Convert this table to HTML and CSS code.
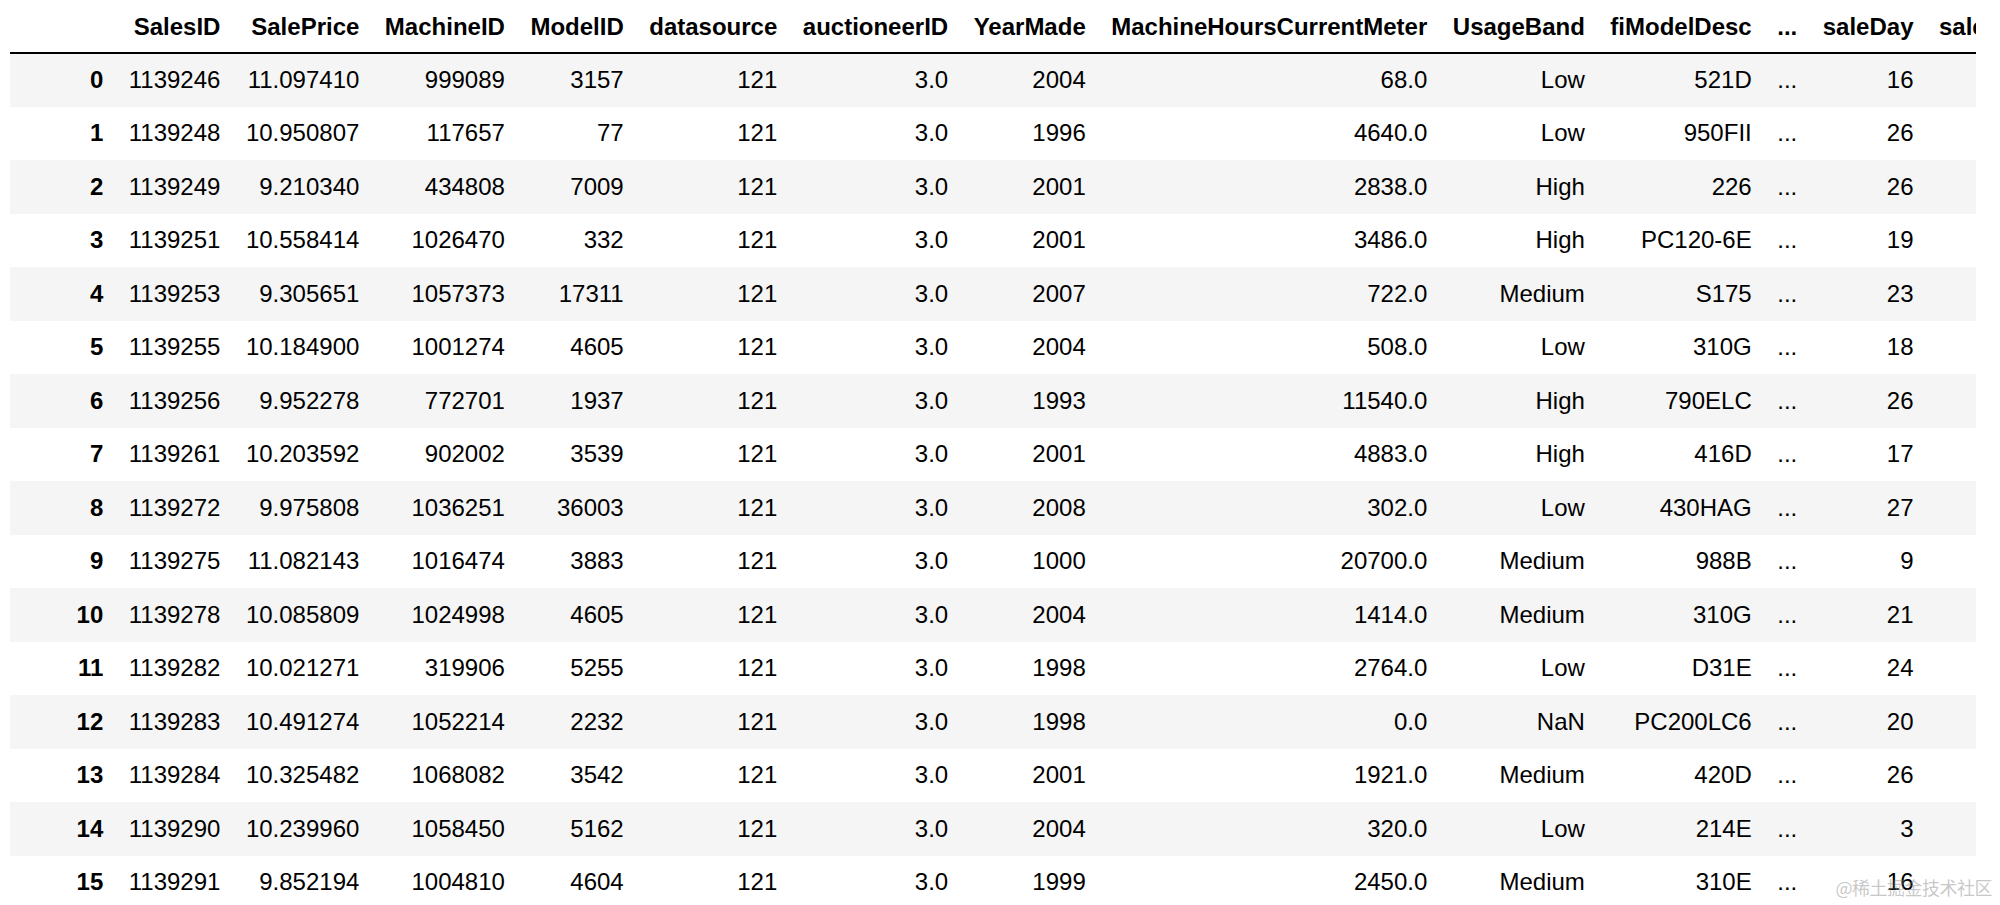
FILE: index.html
```html
<!DOCTYPE html>
<html lang="en">
<head>
<meta charset="utf-8">
<title>DataFrame</title>
<link rel="stylesheet" href="styles.css">
</head>
<body>
<div class="output">
  <table class="dataframe">
    <thead>
      <tr>
        <th class="idx-head"></th>
        <th>SalesID</th>
        <th>SalePrice</th>
        <th>MachineID</th>
        <th>ModelID</th>
        <th>datasource</th>
        <th>auctioneerID</th>
        <th>YearMade</th>
        <th>MachineHoursCurrentMeter</th>
        <th>UsageBand</th>
        <th>fiModelDesc</th>
        <th>...</th>
        <th>saleDay</th>
        <th>saleDayofweek</th>
        <th>saleDayofyear</th>
      </tr>
    </thead>
    <tbody>
      <tr><th>0</th><td>1139246</td><td>11.097410</td><td>999089</td><td>3157</td><td>121</td><td>3.0</td><td>2004</td><td>68.0</td><td>Low</td><td>521D</td><td>...</td><td>16</td><td>3</td><td>320</td></tr>
      <tr><th>1</th><td>1139248</td><td>10.950807</td><td>117657</td><td>77</td><td>121</td><td>3.0</td><td>1996</td><td>4640.0</td><td>Low</td><td>950FII</td><td>...</td><td>26</td><td>4</td><td>86</td></tr>
      <tr><th>2</th><td>1139249</td><td>9.210340</td><td>434808</td><td>7009</td><td>121</td><td>3.0</td><td>2001</td><td>2838.0</td><td>High</td><td>226</td><td>...</td><td>26</td><td>3</td><td>57</td></tr>
      <tr><th>3</th><td>1139251</td><td>10.558414</td><td>1026470</td><td>332</td><td>121</td><td>3.0</td><td>2001</td><td>3486.0</td><td>High</td><td>PC120-6E</td><td>...</td><td>19</td><td>3</td><td>139</td></tr>
      <tr><th>4</th><td>1139253</td><td>9.305651</td><td>1057373</td><td>17311</td><td>121</td><td>3.0</td><td>2007</td><td>722.0</td><td>Medium</td><td>S175</td><td>...</td><td>23</td><td>3</td><td>204</td></tr>
      <tr><th>5</th><td>1139255</td><td>10.184900</td><td>1001274</td><td>4605</td><td>121</td><td>3.0</td><td>2004</td><td>508.0</td><td>Low</td><td>310G</td><td>...</td><td>18</td><td>3</td><td>353</td></tr>
      <tr><th>6</th><td>1139256</td><td>9.952278</td><td>772701</td><td>1937</td><td>121</td><td>3.0</td><td>1993</td><td>11540.0</td><td>High</td><td>790ELC</td><td>...</td><td>26</td><td>4</td><td>239</td></tr>
      <tr><th>7</th><td>1139261</td><td>10.203592</td><td>902002</td><td>3539</td><td>121</td><td>3.0</td><td>2001</td><td>4883.0</td><td>High</td><td>416D</td><td>...</td><td>17</td><td>3</td><td>321</td></tr>
      <tr><th>8</th><td>1139272</td><td>9.975808</td><td>1036251</td><td>36003</td><td>121</td><td>3.0</td><td>2008</td><td>302.0</td><td>Low</td><td>430HAG</td><td>...</td><td>27</td><td>3</td><td>239</td></tr>
      <tr><th>9</th><td>1139275</td><td>11.082143</td><td>1016474</td><td>3883</td><td>121</td><td>3.0</td><td>1000</td><td>20700.0</td><td>Medium</td><td>988B</td><td>...</td><td>9</td><td>3</td><td>221</td></tr>
      <tr><th>10</th><td>1139278</td><td>10.085809</td><td>1024998</td><td>4605</td><td>121</td><td>3.0</td><td>2004</td><td>1414.0</td><td>Medium</td><td>310G</td><td>...</td><td>21</td><td>3</td><td>325</td></tr>
      <tr><th>11</th><td>1139282</td><td>10.021271</td><td>319906</td><td>5255</td><td>121</td><td>3.0</td><td>1998</td><td>2764.0</td><td>Low</td><td>D31E</td><td>...</td><td>24</td><td>3</td><td>236</td></tr>
      <tr><th>12</th><td>1139283</td><td>10.491274</td><td>1052214</td><td>2232</td><td>121</td><td>3.0</td><td>1998</td><td>0.0</td><td>NaN</td><td>PC200LC6</td><td>...</td><td>20</td><td>3</td><td>293</td></tr>
      <tr><th>13</th><td>1139284</td><td>10.325482</td><td>1068082</td><td>3542</td><td>121</td><td>3.0</td><td>2001</td><td>1921.0</td><td>Medium</td><td>420D</td><td>...</td><td>26</td><td>4</td><td>117</td></tr>
      <tr><th>14</th><td>1139290</td><td>10.239960</td><td>1058450</td><td>5162</td><td>121</td><td>3.0</td><td>2004</td><td>320.0</td><td>Low</td><td>214E</td><td>...</td><td>3</td><td>3</td><td>185</td></tr>
      <tr><th>15</th><td>1139291</td><td>9.852194</td><td>1004810</td><td>4604</td><td>121</td><td>3.0</td><td>1999</td><td>2450.0</td><td>Medium</td><td>310E</td><td>...</td><td>16</td><td>3</td><td>258</td></tr>
    </tbody>
  </table>
</div>
<div class="watermark">@稀土掘金技术社区</div>
</body>
</html>
```

FILE: styles.css
```css
html, body {
  margin: 0;
  padding: 0;
  background: #ffffff;
  overflow: hidden;
  height: 905px;
}

body {
  font-family: "Liberation Sans", Arial, Helvetica, sans-serif;
  color: #000;
  position: relative;
}

.output {
  margin-left: 10px;
  padding-top: 2px;
  width: 1966px;
  overflow: hidden;
}

.dataframe {
  border-collapse: collapse;
  border-spacing: 0;
  width: max-content;
  font-size: 24px;
  color: #000;
}

.dataframe th,
.dataframe td {
  text-align: right;
  vertical-align: middle;
  padding: 0 12.75px;
  line-height: normal;
  white-space: nowrap;
  border: none;
}

.dataframe th {
  font-weight: bold;
}

.dataframe thead {
  border-bottom: 2px solid #000;
}

.dataframe thead tr {
  height: 51px;
}

.dataframe thead th {
  vertical-align: bottom;
  padding-bottom: 11px;
}

.dataframe .idx-head {
  min-width: 80.5px;
}

.dataframe tbody tr {
  height: 53.5px;
}

.dataframe tbody tr:nth-child(odd) {
  background: #f5f5f5;
}

.watermark {
  position: absolute;
  right: 8px;
  top: 875px;
  font-family: "Noto Sans CJK SC", "Liberation Sans", sans-serif;
  font-size: 18px;
  line-height: 24px;
  color: rgba(130, 130, 130, 0.45);
  letter-spacing: -0.5px;
}
```
